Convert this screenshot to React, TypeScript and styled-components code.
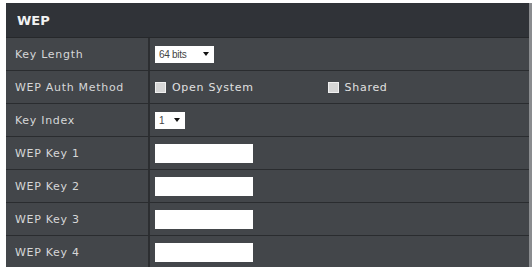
import React from 'react';
import styled, { createGlobalStyle } from 'styled-components';

const Global = createGlobalStyle`
  html, body {
    margin: 0;
    padding: 0;
    background: #ffffff;
  }
  body {
    font-family: "DejaVu Sans", Verdana, sans-serif;
  }
`;

const Page = styled.div`
  padding: 3px 0 0 6px;
  width: 526px;
  height: 267px;
  box-sizing: border-box;
`;

const Panel = styled.div`
  width: 523px;
  background: #43464a;
  border-right: 3px solid #8a8c8f;
  border-bottom: 2px solid #6b6d70;
  box-sizing: content-box;
`;

const Header = styled.div`
  height: 34px;
  display: flex;
  align-items: center;
  padding-left: 11px;
  background: #303338;
  color: #f2f2f2;
  font-size: 13px;
  font-weight: bold;
  border-bottom: 1px solid #26282b;
`;

const Row = styled.div`
  display: grid;
  grid-template-columns: 144px 1fr;
  height: 32px;
  border-bottom: 1px solid #2a2c2f;
  &:last-child {
    border-bottom: none;
  }
`;

const Label = styled.div`
  display: flex;
  align-items: center;
  padding-left: 9px;
  color: #d6d7d8;
  font-size: 11px;
  letter-spacing: 0.7px;
  border-right: 2px solid #2c2e31;
`;

const Field = styled.div`
  display: flex;
  align-items: center;
  padding-left: 5px;
`;

const Select = styled.div<{ $w: number }>`
  width: ${(p) => p.$w}px;
  height: 17px;
  box-sizing: border-box;
  background: #ffffff;
  color: #444;
  font-family: "Liberation Sans", Arial, sans-serif;
  font-size: 10px;
  letter-spacing: -0.3px;
  display: flex;
  align-items: center;
  justify-content: space-between;
  padding: 0 5px 0 4px;
`;

const Arrow = styled.span`
  width: 0;
  height: 0;
  border-left: 3px solid transparent;
  border-right: 3px solid transparent;
  border-top: 4px solid #111;
`;

const TextBox = styled.div`
  width: 98px;
  height: 19px;
  background: #ffffff;
`;

const Check = styled.label<{ $gap?: number }>`
  display: flex;
  align-items: center;
  gap: 6px;
  color: #e0e0e0;
  font-size: 11px;
  letter-spacing: 0.7px;
  margin-right: ${(p) => p.$gap ?? 0}px;
`;

const Box = styled.span`
  width: 9px;
  height: 9px;
  background: #d6d6d6;
  border: 1px solid #f0f0f0;
`;

const keys = ['WEP Key 1', 'WEP Key 2', 'WEP Key 3', 'WEP Key 4'];

export default function App() {
  return (
    <>
      <Global />
      <Page>
        <Panel>
          <Header>WEP</Header>
          <Row>
            <Label>Key Length</Label>
            <Field>
              <Select $w={59}>
                64 bits <Arrow />
              </Select>
            </Field>
          </Row>
          <Row>
            <Label>WEP Auth Method</Label>
            <Field>
              <Check $gap={74}>
                <Box /> Open System
              </Check>
              <Check>
                <Box /> Shared
              </Check>
            </Field>
          </Row>
          <Row>
            <Label>Key Index</Label>
            <Field>
              <Select $w={30}>
                1 <Arrow />
              </Select>
            </Field>
          </Row>
          {keys.map((k) => (
            <Row key={k}>
              <Label>{k}</Label>
              <Field>
                <TextBox />
              </Field>
            </Row>
          ))}
        </Panel>
      </Page>
    </>
  );
}
